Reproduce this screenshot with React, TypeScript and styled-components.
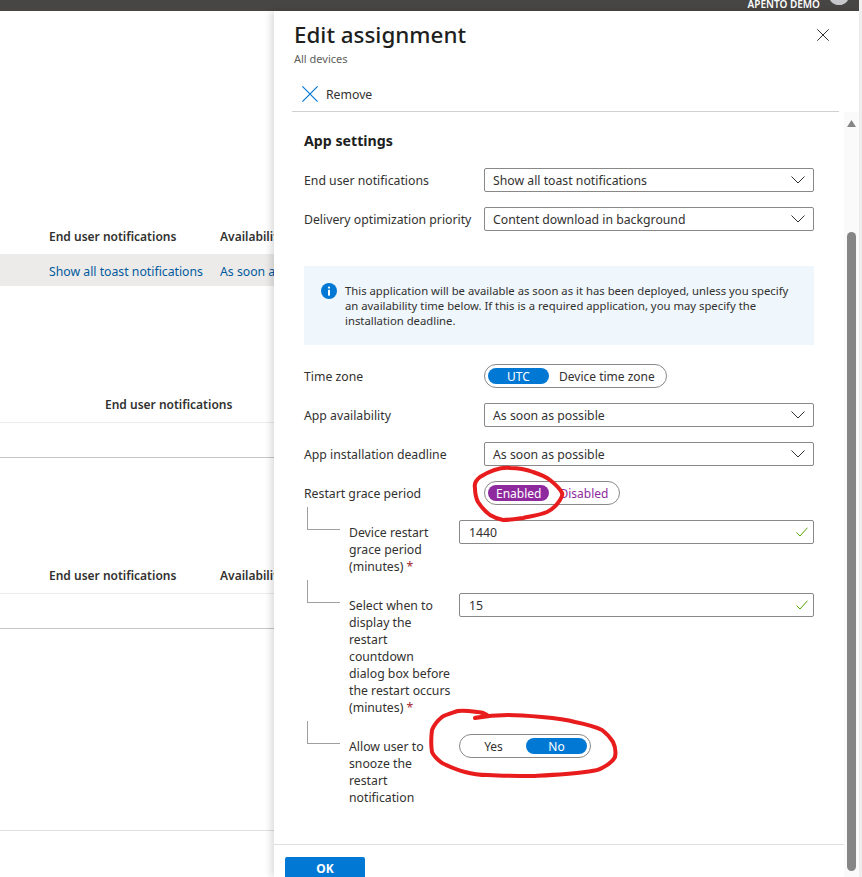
import React from 'react';
import styled, { createGlobalStyle } from 'styled-components';

const GlobalStyle = createGlobalStyle`
  html, body {
    margin: 0;
    padding: 0;
    background: #fff;
  }
  * {
    box-sizing: border-box;
  }
`;

const Page = styled.div`
  position: relative;
  width: 862px;
  height: 877px;
  overflow: hidden;
  background: #f1f1f1;
  color: #323130;
  font-family: 'Noto Sans', 'Open Sans', sans-serif;
  font-size: 12.25px;
`;

const Shell = styled.div`
  width: 859px;
  height: 877px;
  display: flex;
  flex-direction: column;
  background: #fff;
`;

const TopBar = styled.header`
  height: 11px;
  flex: none;
  display: flex;
  justify-content: flex-end;
  align-items: flex-end;
  gap: 8px;
  padding-right: 9px;
  overflow: hidden;
  background: #484644;
`;

const Account = styled.span`
  flex: none;
  color: #fff;
  font-size: 10px;
  font-weight: 600;
  line-height: 12px;
  margin-bottom: 1px;
`;

const Avatar = styled.span`
  flex: none;
  width: 22px;
  height: 23px;
  margin-bottom: 6px;
  border-radius: 50%;
  background: #c8c8cc;
`;

const Main = styled.div`
  flex: 1;
  min-height: 0;
  display: flex;
`;

const Backdrop = styled.section`
  width: 274px;
  flex: none;
  overflow: hidden;
`;

const TableBlock = styled.div<{ $top: number }>`
  width: 600px;
  margin-top: ${(p) => p.$top}px;
`;

const HeadRow = styled.div<{ $lined?: boolean; $indent: number }>`
  height: ${(p) => (p.$lined ? 36 : 32)}px;
  display: flex;
  align-items: center;
  padding: 0 0 ${(p) => (p.$lined ? 0 : 4)}px ${(p) => p.$indent}px;
  border-bottom: ${(p) => (p.$lined ? '1px solid #edebe9' : 'none')};
  font-size: 12px;
  font-weight: 600;
`;

const BodyRow = styled.div<{ $selected?: boolean }>`
  height: ${(p) => (p.$selected ? 32 : 35)}px;
  display: flex;
  align-items: center;
  padding: ${(p) => (p.$selected ? '2px' : '0')} 0 0 49px;
  background: ${(p) => (p.$selected ? '#edebe9' : 'transparent')};
  border-bottom: ${(p) => (p.$selected ? 'none' : '1px solid #c8c6c4')};
  color: #005a9e;
`;

const NotifyCell = styled.span`
  width: 171px;
  flex: none;
  white-space: nowrap;
`;

const Divider = styled.div`
  width: 274px;
  height: 1px;
  margin-top: 201px;
  background: #e1dfdd;
`;

const Panel = styled.aside`
  position: relative;
  flex: 1;
  min-width: 0;
  display: flex;
  flex-direction: column;
  background: #fff;
  box-shadow: -3px 0 7px rgba(0, 0, 0, 0.14);
`;

const PanelHead = styled.div`
  flex: none;
  height: 101px;
  display: flex;
  flex-direction: column;
  padding: 8px 20px 0 18px;
`;

const TitleRow = styled.div`
  display: flex;
  align-items: center;
  justify-content: space-between;
  padding: 0 10px 0 2px;
`;

const Title = styled.h1`
  margin: 0;
  font-size: 22.4px;
  font-weight: 500;
  line-height: 31px;
  color: #201f1e;
`;

const IconButton = styled.button`
  display: flex;
  padding: 0;
  border: 0;
  background: none;
  color: #323130;
`;

const Subtitle = styled.div`
  padding-left: 2px;
  margin-top: 1px;
  font-size: 11px;
  line-height: 16px;
  color: #605e5c;
`;

const CommandBar = styled.div`
  flex: 1;
  display: flex;
  align-items: center;
  gap: 8px;
  padding: 7px 0 0 10px;
  margin-top: 3px;
  border-bottom: 1px solid #d2d0ce;
`;

const PanelBody = styled.div`
  flex: 1;
  min-height: 0;
  display: flex;
`;

const BodyColumn = styled.div`
  flex: 1;
  min-width: 0;
  display: flex;
  flex-direction: column;
`;

const Form = styled.div`
  flex: 1;
  min-height: 0;
  padding: 20px 30px 0;
  overflow: hidden;
`;

const SectionTitle = styled.h2`
  margin: 0 0 18px;
  font-size: 14.2px;
  font-weight: 700;
  line-height: 18px;
  color: #201f1e;
`;

const FieldRow = styled.div`
  display: grid;
  grid-template-columns: 180px 1fr;
  align-items: center;
  margin-bottom: 15px;
`;

const FieldLabel = styled.label`
  white-space: nowrap;
`;

const SelectBox = styled.div`
  height: 24px;
  display: flex;
  align-items: center;
  justify-content: space-between;
  padding: 0 8px;
  border: 1px solid #8a8886;
  border-radius: 2px;
  color: #323130;
`;

const InfoBox = styled.div`
  height: 79px;
  display: flex;
  gap: 8px;
  margin: 35px 0 19px;
  padding: 17px 20px 0 17px;
  background: #eff6fc;
  font-size: 11.3px;
  line-height: 15px;
`;

const InfoIcon = styled.svg`
  flex: none;
`;

const ToggleTrack = styled.div`
  display: inline-flex;
  height: 24px;
  gap: 2px;
  padding: 3px;
  border: 1px solid #8a8886;
  border-radius: 12px;
  justify-self: start;
  font-size: 12px;
`;

const ToggleOption = styled.span<{ $active?: boolean; $tone: string; $idle: string }>`
  min-width: 61px;
  display: flex;
  align-items: center;
  justify-content: center;
  padding: 0 8px;
  border-radius: 9px;
  white-space: nowrap;
  background: ${(p) => (p.$active ? p.$tone : 'transparent')};
  color: ${(p) => (p.$active ? '#fff' : p.$idle)};
`;

const ChildRow = styled.div`
  display: grid;
  grid-template-columns: 45px 110px 1fr;
  align-items: start;
  margin-bottom: 18.5px;
`;

const Elbow = styled.span`
  display: block;
  width: 33px;
  height: 23px;
  margin: -13px 0 0 3px;
  border-left: 1px solid #a19f9d;
  border-bottom: 1px solid #a19f9d;
`;

const ChildLabel = styled.label`
  padding-top: 3.5px;
  line-height: 17px;
  white-space: nowrap;
`;

const Required = styled.span`
  color: #a4262c;
`;

const TextInput = styled.div`
  height: 24px;
  display: flex;
  align-items: center;
  justify-content: space-between;
  padding: 0 5px 0 9px;
  border: 1px solid #8a8886;
  border-radius: 2px;
`;

const Footer = styled.div`
  flex: none;
  height: 33px;
  overflow: hidden;
  padding: 12px 0 0 11px;
  border-top: 1px solid #e1dfdd;
`;

const PrimaryButton = styled.button`
  width: 80px;
  height: 30px;
  padding: 0 0 8px;
  border: 0;
  border-radius: 2px 2px 0 0;
  background: #0078d4;
  color: #fff;
  font-family: inherit;
  font-size: 12px;
  font-weight: 700;
`;

const ScrollTrack = styled.div`
  width: 15px;
  flex: none;
  display: flex;
  flex-direction: column;
  align-items: center;
  padding-top: 8px;
  background: #fafafa;
`;

const ScrollThumb = styled.div`
  width: 9px;
  height: 639px;
  margin-top: 105px;
  border-radius: 5px;
  background: #868686;
`;

const Annotations = styled.svg`
  position: absolute;
  top: 0;
  left: 0;
  pointer-events: none;
`;

const Chevron = () => (
  <svg width="14" height="8" viewBox="0 0 14 8" fill="none" stroke="#323130" strokeWidth="1">
    <path d="M0.5 0.5 7 7 13.5 0.5" />
  </svg>
);

const Check = () => (
  <svg width="12" height="10" viewBox="0 0 12 10" fill="none" stroke="#57a300" strokeWidth="1">
    <path d="M0.5 5.5 4 9 11.5 0.7" />
  </svg>
);

const Select = ({ value }: { value: string }) => (
  <SelectBox>
    {value}
    <Chevron />
  </SelectBox>
);

const BLUE = '#0078d4';
const PURPLE = '#8e2a9e';

const Toggle = ({
  options,
  active,
  tone = BLUE,
  idle = '#323130',
}: {
  options: string[];
  active: string;
  tone?: string;
  idle?: string;
}) => (
  <ToggleTrack>
    {options.map((o) => (
      <ToggleOption key={o} $active={o === active} $tone={tone} $idle={idle}>
        {o}
      </ToggleOption>
    ))}
  </ToggleTrack>
);

const BackgroundTables = () => (
  <Backdrop>
    <TableBlock $top={211}>
      <HeadRow $indent={49}>
        <NotifyCell>End user notifications</NotifyCell>
        Availability
      </HeadRow>
      <BodyRow $selected>
        <NotifyCell>Show all toast notifications</NotifyCell>
        As soon as possible
      </BodyRow>
    </TableBlock>
    <TableBlock $top={101}>
      <HeadRow $lined $indent={105}>
        End user notifications
      </HeadRow>
      <BodyRow />
    </TableBlock>
    <TableBlock $top={100}>
      <HeadRow $lined $indent={49}>
        <NotifyCell>End user notifications</NotifyCell>
        Availability
      </HeadRow>
      <BodyRow />
    </TableBlock>
    <Divider />
  </Backdrop>
);

export default function App() {
  return (
    <Page>
      <GlobalStyle />
      <Shell>
        <TopBar>
          <Account>APENTO DEMO</Account>
          <Avatar />
        </TopBar>
        <Main>
          <BackgroundTables />
          <Panel>
            <PanelHead>
              <TitleRow>
                <Title>Edit assignment</Title>
                <IconButton aria-label="Close">
                  <svg width="12" height="12" viewBox="0 0 12 12" fill="none" stroke="currentColor" strokeWidth="1">
                    <path d="M0.3 0.3 11.7 11.7M11.7 0.3 0.3 11.7" />
                  </svg>
                </IconButton>
              </TitleRow>
              <Subtitle>All devices</Subtitle>
              <CommandBar>
                <svg width="16" height="16" viewBox="0 0 16 16" fill="none" stroke="#0078d4" strokeWidth="1.2">
                  <path d="M0.4 0.4 15.6 15.6M15.6 0.4 0.4 15.6" />
                </svg>
                Remove
              </CommandBar>
            </PanelHead>
            <PanelBody>
              <BodyColumn>
                <Form>
                  <SectionTitle>App settings</SectionTitle>
                  <FieldRow>
                    <FieldLabel>End user notifications</FieldLabel>
                    <Select value="Show all toast notifications" />
                  </FieldRow>
                  <FieldRow>
                    <FieldLabel>Delivery optimization priority</FieldLabel>
                    <Select value="Content download in background" />
                  </FieldRow>
                  <InfoBox>
                    <InfoIcon width="16" height="16" viewBox="0 0 16 16">
                      <circle cx="8" cy="8" r="8" fill="#0078d4" />
                      <rect x="7" y="6.8" width="2" height="5.8" fill="#fff" />
                      <circle cx="8" cy="4.6" r="1.15" fill="#fff" />
                    </InfoIcon>
                    <div>
                      This application will be available as soon as it has been deployed, unless you specify an
                      availability time below. If this is a required application, you may specify the installation
                      deadline.
                    </div>
                  </InfoBox>
                  <FieldRow>
                    <FieldLabel>Time zone</FieldLabel>
                    <Toggle options={['UTC', 'Device time zone']} active="UTC" />
                  </FieldRow>
                  <FieldRow>
                    <FieldLabel>App availability</FieldLabel>
                    <Select value="As soon as possible" />
                  </FieldRow>
                  <FieldRow>
                    <FieldLabel>App installation deadline</FieldLabel>
                    <Select value="As soon as possible" />
                  </FieldRow>
                  <FieldRow>
                    <FieldLabel>Restart grace period</FieldLabel>
                    <Toggle options={['Enabled', 'Disabled']} active="Enabled" tone={PURPLE} idle={PURPLE} />
                  </FieldRow>
                  <ChildRow>
                    <Elbow />
                    <ChildLabel>
                      Device restart
                      <br />
                      grace period
                      <br />
                      (minutes) <Required>*</Required>
                    </ChildLabel>
                    <TextInput>
                      1440
                      <Check />
                    </TextInput>
                  </ChildRow>
                  <ChildRow>
                    <Elbow />
                    <ChildLabel>
                      Select when to
                      <br />
                      display the
                      <br />
                      restart
                      <br />
                      countdown
                      <br />
                      dialog box before
                      <br />
                      the restart occurs
                      <br />
                      (minutes) <Required>*</Required>
                    </ChildLabel>
                    <TextInput>
                      15
                      <Check />
                    </TextInput>
                  </ChildRow>
                  <ChildRow>
                    <Elbow />
                    <ChildLabel>
                      Allow user to
                      <br />
                      snooze the
                      <br />
                      restart
                      <br />
                      notification
                    </ChildLabel>
                    <Toggle options={['Yes', 'No']} active="No" />
                  </ChildRow>
                </Form>
                <Footer>
                  <PrimaryButton>OK</PrimaryButton>
                </Footer>
              </BodyColumn>
              <ScrollTrack>
                <svg width="9" height="7" viewBox="0 0 9 7">
                  <path d="M4.5 0 9 7H0z" fill="#868686" />
                </svg>
                <ScrollThumb />
              </ScrollTrack>
            </PanelBody>
          </Panel>
        </Main>
      </Shell>
      <Annotations
        width="862"
        height="877"
        viewBox="0 0 862 877"
        fill="none"
        stroke="#e81c1c"
        strokeWidth="4"
        strokeLinecap="round"
        strokeLinejoin="round"
      >
        <path d="M510 468C500 467 490 471 480 477C475 481 474 484 475 488C475 495 476 498 478 502C482 508 486 512 490 515C495 518 498 519 503 520C510 520 516 519 523 518C532 516 540 515 547 512C553 509 557 505 560 500C562 497 563 495 562 493C560 488 555 484 550 480C545 476 539 474 533 472C525 469 518 468 510 468" />
        <path d="M475 718C480 717 484 717 487 715C484 713 481 712 478 712C470 711 464 710 458 711C452 713 447 714 442 717C437 721 434 725 432 730C431 738 431 746 432 752C434 757 438 760 442 763C450 767 457 770 465 772C472 774 480 775 488 775C504 776 520 776 535 776C552 775 570 774 585 772C592 771 597 771 602 768C608 765 613 761 615 757C616 752 615 746 613 742C610 737 606 733 602 730C594 726 585 724 575 722C564 719 553 718 542 717C531 716 520 715 508 715C497 715 486 716 475 718" />
      </Annotations>
    </Page>
  );
}
